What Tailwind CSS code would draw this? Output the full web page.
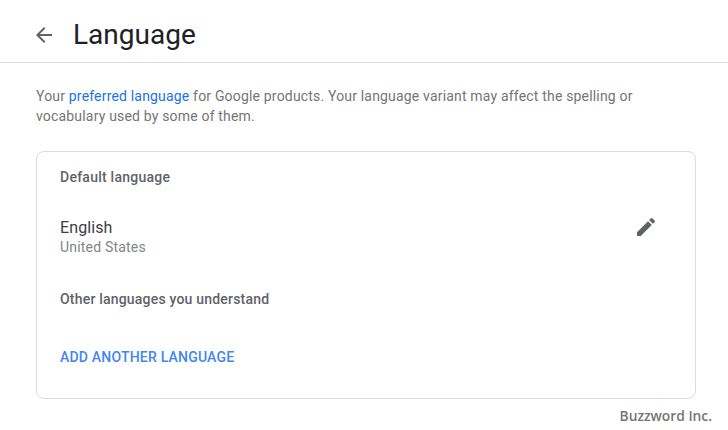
<!DOCTYPE html>
<html lang="en">
<head>
  <meta charset="UTF-8" />
  <title>Language</title>
  <script src="https://cdn.jsdelivr.net/npm/@tailwindcss/browser@4"></script>
</head>
<body class="relative w-[728px] h-[430px] overflow-hidden bg-white font-['Roboto',sans-serif]">
  <!-- Header -->
  <header class="flex items-center h-[63px] pl-[32px] pt-[8px] border-b border-[#dadce0]">
    <svg class="w-6 h-6 text-[#5f6368]" viewBox="0 0 24 24" fill="currentColor"><path d="M20 11H7.83l5.59-5.59L12 4l-8 8 8 8 1.41-1.41L7.83 13H20v-2z"/></svg>
    <h1 class="ml-[17px] text-[28px] leading-[36px] text-[#202124]">Language</h1>
  </header>

  <main class="px-[36px] pt-[23px]">
    <p class="w-[640px] text-[14px] leading-[20px] tracking-[0.18px] text-[#757575]">Your <a class="text-[#1a73e8]">preferred language</a> for Google products. Your language variant may affect the spelling or vocabulary used by some of them.</p>

    <!-- Language card -->
    <section class="mt-[25px] w-[660px] h-[248px] border border-[#dadce0] rounded-lg pl-[23px] pr-[37px] pt-[15px]">
      <h2 class="text-[14px] leading-[20px] font-medium tracking-[0.25px] text-[#5f6368]">Default language</h2>
      <div class="flex justify-between mt-[29px]">
        <div>
          <div class="text-[16px] leading-[24px] tracking-[0.1px] text-[#3c4043]">English</div>
          <div class="text-[14px] leading-[14px] mb-[2px] tracking-[0.2px] text-[#80868b]">United States</div>
        </div>
        <svg class="w-6 h-6 -mt-[1px] text-[#5f6368]" viewBox="0 0 24 24" fill="currentColor"><path d="M3 17.25V21h3.75L17.81 9.94l-3.75-3.75L3 17.25zM20.71 7.04a1 1 0 0 0 0-1.41l-2.34-2.34a1 1 0 0 0-1.41 0l-1.83 1.83 3.75 3.75 1.83-1.83z"/></svg>
      </div>
      <h2 class="mt-[33px] text-[14px] leading-[20px] font-medium tracking-[0.2px] text-[#5f6368]">Other languages you understand</h2>
      <a class="block mt-[38px] text-[14px] leading-[20px] font-medium tracking-[0.2px] text-[#4285f4] uppercase">Add another language</a>
    </section>
  </main>

  <!-- Watermark -->
  <div class="absolute right-[16px] top-[406px] text-[13.8px] leading-[20px] font-semibold text-[#757575] font-['Open_Sans',sans-serif]">Buzzword Inc.</div>
</body>
</html>
